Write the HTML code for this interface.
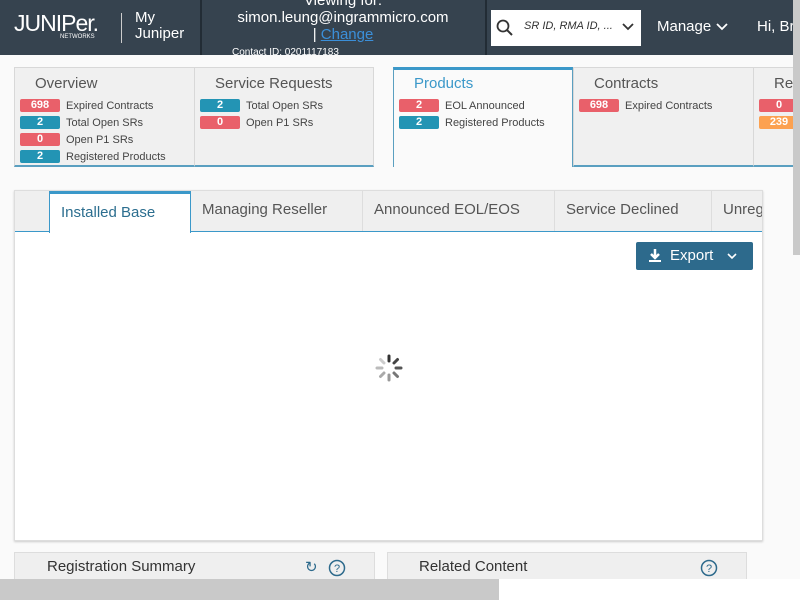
<!DOCTYPE html>
<html><head><meta charset="utf-8"><style>
*{box-sizing:border-box;margin:0;padding:0}
body{width:800px;height:600px;overflow:hidden;background:#fafafa;font-family:"Liberation Sans",sans-serif;position:relative;color:#444}
.hdr{position:absolute;left:0;top:0;width:800px;height:55px;background:#36434f}
.abs{position:absolute;white-space:nowrap}
.badge{position:absolute;width:40px;height:13px;border-radius:2px;color:#fff;font-size:11px;font-weight:bold;text-align:center;line-height:13px}
.r{background:#e9606a}.b{background:#2394b4}.o{background:#fca150}
.lbl{position:absolute;font-size:11px;color:#444;white-space:nowrap}
.card{position:absolute;top:67px;height:100px;background:#f0f0f0;border:1px solid #d8d8d8;border-bottom:2px solid #5a9fc0}
.card h3{position:absolute;top:7px;font-size:15px;font-weight:normal;color:#555;white-space:nowrap}
.tab{position:absolute;top:191px;height:40px;background:#efefef;border-right:1px solid #ddd;font-size:15px;color:#555;line-height:38px;padding-left:11px;white-space:nowrap}
</style></head><body>
<div class="hdr">
 <div class="abs" style="left:14px;top:10px;color:#fff;font-size:23px;letter-spacing:-1px">JUNIPer.</div>
 <div class="abs" style="left:60px;top:34px;color:#fff;font-size:6px">NETWORKS</div>
 <div class="abs" style="left:121px;top:13px;width:1px;height:30px;background:#ccc"></div>
 <div class="abs" style="left:135px;top:10px;color:#fff;font-size:15px;line-height:16px">My<br>Juniper</div>
 <div class="abs" style="left:200px;top:0;width:2px;height:55px;background:#222c35"></div>
 <div class="abs" style="left:202px;top:-8px;width:282px;text-align:center;color:#fff;font-size:15px;line-height:17px">Viewing for:<br>simon.leung@ingrammicro.com<br>| <span style="color:#3b8fd9;text-decoration:underline">Change</span></div>
 <div class="abs" style="left:232px;top:47px;color:#fff;font-size:10px">Contact ID: 0201117183</div>
 <div class="abs" style="left:485px;top:0;width:2px;height:55px;background:#222c35"></div>
 <div class="abs" style="left:491px;top:10px;width:150px;height:36px;background:#fff"></div>
 <svg class="abs" style="left:495px;top:18px" width="20" height="20"><circle cx="8" cy="8" r="5.5" fill="none" stroke="#333" stroke-width="1.8"/><line x1="12" y1="12" x2="17" y2="17" stroke="#333" stroke-width="2"/></svg>
 <div class="abs" style="left:524px;top:20px;font-size:11px;font-style:italic;color:#333">SR ID, RMA ID, ...</div>
 <svg class="abs" style="left:622px;top:22px" width="12" height="10"><path d="M1 2 L6 7 L11 2" fill="none" stroke="#333" stroke-width="1.8"/></svg>
 <div class="abs" style="left:657px;top:18px;font-size:15px;color:#fff">Manage</div>
 <svg class="abs" style="left:716px;top:22px" width="12" height="10"><path d="M1 2 L6 7 L11 2" fill="none" stroke="#fff" stroke-width="1.8"/></svg>
 <div class="abs" style="left:757px;top:18px;font-size:15px;color:#fff">Hi, Bra</div>
</div>
<div class="card" style="left:14px;width:181px"><h3 style="left:20px">Overview</h3></div>
<div class="card" style="left:194px;width:180px"><h3 style="left:20px">Service Requests</h3></div>
<div class="card" style="left:393px;width:180px;background:#fafafa;border-top:3px solid #3b98c9;border-left:1px solid #5a9fc0;border-right:1px solid #5a9fc0;border-bottom:none"><h3 style="left:20px;top:5px;color:#3b98c9">Products</h3></div>
<div class="card" style="left:573px;width:181px"><h3 style="left:20px">Contracts</h3></div>
<div class="card" style="left:753px;width:60px"><h3 style="left:20px">Re</h3></div>
<div class="badge r" style="left:20px;top:99px">698</div><div class="lbl" style="left:66px;top:100px">Expired Contracts</div>
<div class="badge b" style="left:20px;top:116px">2</div><div class="lbl" style="left:66px;top:117px">Total Open SRs</div>
<div class="badge r" style="left:20px;top:133px">0</div><div class="lbl" style="left:66px;top:134px">Open P1 SRs</div>
<div class="badge b" style="left:20px;top:150px">2</div><div class="lbl" style="left:66px;top:151px">Registered Products</div>
<div class="badge b" style="left:200px;top:99px">2</div><div class="lbl" style="left:246px;top:100px">Total Open SRs</div>
<div class="badge r" style="left:200px;top:116px">0</div><div class="lbl" style="left:246px;top:117px">Open P1 SRs</div>
<div class="badge r" style="left:399px;top:99px">2</div><div class="lbl" style="left:445px;top:100px">EOL Announced</div>
<div class="badge b" style="left:399px;top:116px">2</div><div class="lbl" style="left:445px;top:117px">Registered Products</div>
<div class="badge r" style="left:579px;top:99px">698</div><div class="lbl" style="left:625px;top:100px">Expired Contracts</div>
<div class="badge r" style="left:759px;top:99px">0</div>
<div class="badge o" style="left:759px;top:116px">239</div>

<div class="abs" style="left:14px;top:190px;width:749px;height:351px;background:#fff;border:1px solid #ddd;box-shadow:0 1px 2px #ccc"></div>
<div class="abs" style="left:15px;top:191px;width:747px;height:41px;background:#efefef;border-bottom:1px solid #3b98c9"></div>
<div class="tab" style="left:712px;width:50px;overflow:hidden;border:none">Unregistered</div>
<div class="tab" style="left:555px;width:157px">Service Declined</div>
<div class="tab" style="left:363px;width:192px">Announced EOL/EOS</div>
<div class="tab" style="left:191px;width:172px">Managing Reseller</div>
<div class="tab" style="left:49px;width:142px;background:#fff;border-top:3px solid #3b98c9;border-left:1px solid #3b98c9;border-right:1px solid #3b98c9;height:42px;color:#2c6e8f;line-height:37px">Installed Base</div>
<div class="abs" style="left:636px;top:242px;width:117px;height:28px;background:#2d6a8c;border-radius:2px;color:#fff;font-size:15px;line-height:27px;padding-left:34px">Export</div>
<svg class="abs" style="left:648px;top:248px" width="14" height="16"><path d="M7 1 V9 M3 6 L7 10 L11 6" stroke="#fff" stroke-width="2.5" fill="none"/><rect x="1" y="12" width="12" height="2" fill="#fff"/></svg>
<svg class="abs" style="left:727px;top:252px" width="10" height="8"><path d="M1 2 L5 6 L9 2" fill="none" stroke="#fff" stroke-width="1.6"/></svg>
<svg class="abs" style="left:374px;top:353px" width="30" height="30">
<g stroke-linecap="round" stroke-width="3">
<line x1="15" y1="3" x2="15" y2="8" stroke="#333"/><line x1="23.5" y1="6.5" x2="20" y2="10" stroke="#444"/><line x1="27" y1="15" x2="22" y2="15" stroke="#555"/><line x1="23.5" y1="23.5" x2="20" y2="20" stroke="#777"/><line x1="15" y1="27" x2="15" y2="22" stroke="#999"/><line x1="6.5" y1="23.5" x2="10" y2="20" stroke="#aaa"/><line x1="3" y1="15" x2="8" y2="15" stroke="#bbb"/><line x1="6.5" y1="6.5" x2="10" y2="10" stroke="#ccc"/></g></svg>

<div class="abs" style="left:14px;top:552px;width:361px;height:40px;background:#efefef;border:1px solid #ddd"></div>
<div class="abs" style="left:47px;top:558px;font-size:15px;color:#333">Registration Summary</div>
<div class="abs" style="left:305px;top:558px;font-size:15px;color:#2d6a8c">↻</div>
<svg class="abs" style="left:328px;top:559px" width="18" height="18"><circle cx="9" cy="9" r="7.5" fill="none" stroke="#2d6a8c" stroke-width="1.5"/><text x="9" y="13" font-size="11" text-anchor="middle" fill="#2d6a8c" font-family="Liberation Sans">?</text></svg>
<div class="abs" style="left:387px;top:552px;width:360px;height:40px;background:#efefef;border:1px solid #ddd"></div>
<div class="abs" style="left:419px;top:558px;font-size:15px;color:#333">Related Content</div>
<svg class="abs" style="left:700px;top:559px" width="18" height="18"><circle cx="9" cy="9" r="7.5" fill="none" stroke="#2d6a8c" stroke-width="1.5"/><text x="9" y="13" font-size="11" text-anchor="middle" fill="#2d6a8c" font-family="Liberation Sans">?</text></svg>

<div class="abs" style="left:0;top:579px;width:800px;height:21px;background:#fff"></div>
<div class="abs" style="left:0;top:579px;width:499px;height:21px;background:#c9c9c9"></div>
<div class="abs" style="left:793px;top:0;width:7px;height:255px;background:#c9c9c9"></div>
</body></html>
